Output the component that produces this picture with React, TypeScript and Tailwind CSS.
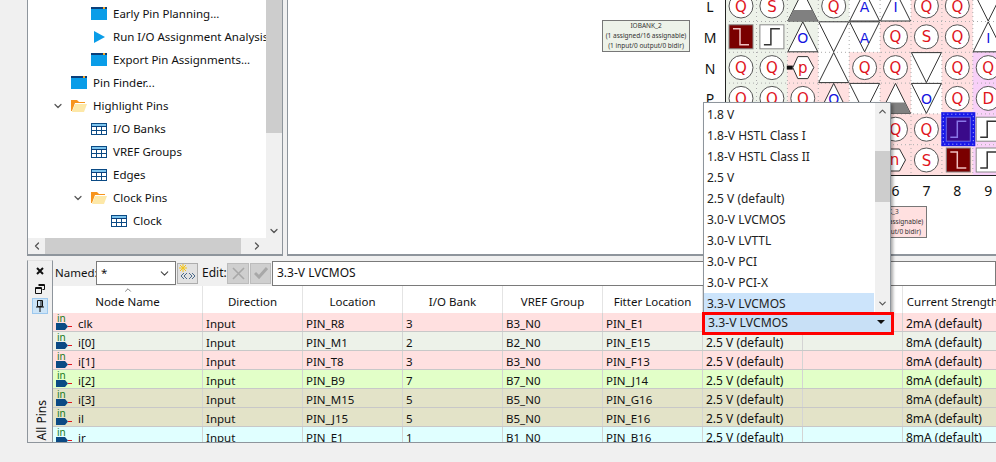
import { ChevronDown, ChevronLeft, ChevronRight, ChevronUp } from "lucide-react";

const font = "font-['Noto_Sans','Open_Sans',sans-serif]";

function WindowIcon() {
  return (
    <svg width="16" height="13" viewBox="0 0 16 13" className="shrink-0">
      <rect width="16" height="13" fill="#0a9de8" />
      <rect width="16" height="2" fill="#0b3f7a" />
      <rect x="12" width="2" height="2" fill="#f5a623" />
    </svg>
  );
}

function FolderIcon() {
  return (
    <svg width="16" height="12" viewBox="0 0 16 12" className="shrink-0">
      <path d="M0 11V0h6l2 2h6v1H4L1 11z" fill="#f7941d" />
      <path d="M1 12 4 4h12l-3 8z" fill="#fde8a8" />
    </svg>
  );
}

function TableIcon() {
  return (
    <svg width="16" height="12" viewBox="0 0 16 12" className="shrink-0">
      <rect x="0.5" y="0.5" width="15" height="11" fill="#fff" stroke="#0b4a84" />
      <rect x="1" y="1" width="14" height="2" fill="#7cc4ee" />
      <rect y="3" width="16" height="1" fill="#0b3f7a" />
      <path d="M0 7.5h16M5.5 4v8M10.5 4v8" stroke="#0b4a84" />
    </svg>
  );
}

function TreeRow({ label, indent, icon, open }: { label: string; indent: number; icon: React.ReactNode; open?: boolean }) {
  return (
    <div className="flex h-[23px] items-center whitespace-nowrap" style={{ paddingLeft: indent }}>
      <span className="flex w-[19px] shrink-0 justify-start">
        {open ? <ChevronDown size={12} strokeWidth={2.4} className="text-[#555]" /> : null}
      </span>
      {icon}
      <span className="ml-[6px] text-[11.5px] text-[#111]">{label}</span>
    </div>
  );
}

function TreePanel() {
  return (
    <div className="relative h-full w-[256px] shrink-0 overflow-hidden border-r border-b-2 border-l border-[#8e959c] bg-white">
      <div className="h-[238px] w-[238px] overflow-hidden pt-[2px]">
        <TreeRow label="Early Pin Planning..." indent={44} icon={<WindowIcon />} />
        <TreeRow label="Run I/O Assignment Analysis" indent={44} icon={<span className="flex w-[16px] shrink-0 justify-center"><svg width="12" height="12" viewBox="0 0 12 12"><path d="M1 0l11 6-11 6z" fill="#0a9de8" /></svg></span>} />
        <TreeRow label="Export Pin Assignments..." indent={44} icon={<WindowIcon />} />
        <TreeRow label="Pin Finder..." indent={24} icon={<WindowIcon />} />
        <TreeRow label="Highlight Pins" indent={24} open icon={<FolderIcon />} />
        <TreeRow label="I/O Banks" indent={44} icon={<TableIcon />} />
        <TreeRow label="VREF Groups" indent={44} icon={<TableIcon />} />
        <TreeRow label="Edges" indent={44} icon={<TableIcon />} />
        <TreeRow label="Clock Pins" indent={44} open icon={<FolderIcon />} />
        <TreeRow label="Clock" indent={64} icon={<TableIcon />} />
        <TreeRow label="" indent={64} icon={<TableIcon />} />
      </div>
      <div className="absolute top-0 right-0 bottom-[15px] w-[16px] bg-[#f0f0f0]">
        <div className="h-[133px] bg-[#cdcdcd]" />
        <ChevronDown size={12} strokeWidth={2.6} className="absolute right-[2px] bottom-[2px] text-[#555]" />
      </div>
      <div className="absolute right-0 bottom-0 left-0 flex h-[16px] items-center bg-[#f0f0f0]">
        <ChevronLeft size={12} strokeWidth={2.6} className="ml-[3px] text-[#555]" />
        <div className="ml-[2px] h-full w-[196px] bg-[#cdcdcd]" />
        <ChevronRight size={12} strokeWidth={2.6} className="ml-[10px] text-[#555]" />
      </div>
    </div>
  );
}

type PinKind = "Q" | "S" | "O" | "A" | "I" | "D";

function Circle({ x, y, t }: { x: number; y: number; t: PinKind | "p" }) {
  const colour = t === "Q" || t === "S" || t === "D" ? "#e0141c" : "#1414e0";
  return (
    <g>
      <circle cx={x} cy={y} r="12" fill="#fff" stroke="#555" strokeWidth="1" />
      <text x={x} y={y + 5.5} textAnchor="middle" fontSize="15" fontFamily="DejaVu Sans" fill={colour}>{t}</text>
    </g>
  );
}

function Up({ x, y, t, dark }: { x: number; y: number; t?: string; dark?: boolean }) {
  return (
    <g>
      <path d={`M${x} ${y - 15}L${x + 15} ${y + 15}H${x - 15}Z`} fill="#fff" stroke="#333" strokeWidth="1" />
      {dark ? <path d={`M${x - 9.5} ${y + 4}H${x + 9.5}L${x + 15} ${y + 15}H${x - 15}Z`} fill="#808080" /> : null}
      {t ? <text x={x} y={y + 6} textAnchor="middle" fontSize="14" fontFamily="DejaVu Sans" fill="#1414e0">{t}</text> : null}
    </g>
  );
}

function Down({ x, y, t }: { x: number; y: number; t?: string }) {
  return (
    <g>
      <path d={`M${x} ${y + 15}L${x + 15} ${y - 15}H${x - 15}Z`} fill="#fff" stroke="#333" strokeWidth="1" />
      {t ? <text x={x} y={y + 6} textAnchor="middle" fontSize="14" fontFamily="DejaVu Sans" fill="#1414e0">{t}</text> : null}
    </g>
  );
}

function Clk({ x, y, fall, blue }: { x: number; y: number; fall?: boolean; blue?: boolean }) {
  const fill = fall ? "#7a0000" : blue ? "#3a0a8a" : "#fff";
  const line = fall ? "#f0c0c0" : blue ? "#8a78e8" : "#333";
  const d = fall
    ? `M${x - 8} ${y - 8}H${x - 1}V${y + 8}H${x + 8}`
    : `M${x - 8} ${y + 8}H${x - 1}V${y - 8}H${x + 8}`;
  return (
    <g>
      {blue ? <rect x={x - 17} y={y - 17} width="34" height="34" fill="#1818e8" /> : null}
      {blue ? <rect x={x - 15} y={y - 15} width="30" height="30" fill="none" stroke="#c8c8ff" strokeDasharray="1 3" /> : null}
      <rect x={x - 12} y={y - 12} width="24" height="24" fill={fill} stroke={blue ? "#6a6ae8" : "#888"} strokeWidth="1" />
      <path d={d} fill="none" stroke={line} strokeWidth="1.5" />
    </g>
  );
}

// package grid centres, in page pixels
const cx = (col: number) => 741 + (col - 1) * 30.9;
const cy = (row: number) => 6 + row * 30.8;

function ChipGrid() {
  const green = "#edf2e9";
  const pink = "#ffe0e0";
  const lilac = "#f8d0f8";
  const tints: [number, number, string][] = [
    [1, 0, green], [2, 0, green], [3, 0, green], [4, 0, green], [7, 0, pink], [8, 0, pink],
    [1, 1, green], [2, 1, green], [3, 1, green], [6, 1, pink], [7, 1, pink], [8, 1, pink],
    [1, 2, green], [2, 2, green], [3, 2, pink], [5, 2, pink], [6, 2, pink], [8, 2, pink], [9, 2, lilac],
    [1, 3, green], [2, 3, green], [3, 3, pink], [4, 3, pink], [6, 3, pink], [8, 3, pink], [9, 3, lilac],
    [6, 4, pink], [7, 4, pink], [8, 4, pink], [9, 4, lilac],
    [6, 5, pink], [7, 5, pink], [8, 5, pink], [9, 5, lilac],
  ];
  return (
    <svg width="996" height="256" viewBox="0 0 996 256" className="absolute top-0 left-[-288px]">
      {tints.map(([c, r, f]) => (
        <rect key={`${c}-${r}`} x={cx(c) - 15.5} y={cy(r) - 15.5} width="31" height="31" fill={f} />
      ))}
      {[1, 2, 3, 4, 5, 6, 7, 8, 9].map((c) => (
        <path key={c} d={`M${cx(c) + 15.5} 0V175`} stroke="#aaa" strokeDasharray="1 3" />
      ))}
      {[0, 1, 2, 3, 4].map((r) => (
        <path key={r} d={`M725 ${cy(r) + 15.5}H996`} stroke="#aaa" strokeDasharray="1 3" />
      ))}
      <path d="M725.5 0V175.5H996" fill="none" stroke="#222" />

      {/* row L */}
      <Circle x={cx(1)} y={cy(0)} t="Q" />
      <Circle x={cx(2)} y={cy(0)} t="S" />
      <Up x={cx(3)} y={cy(0)} dark />
      <Circle x={cx(4)} y={cy(0)} t="Q" />
      <Up x={cx(5)} y={cy(0)} t="A" />
      <Up x={cx(6)} y={cy(0)} t="I" />
      <Circle x={cx(7)} y={cy(0)} t="Q" />
      <Circle x={cx(8)} y={cy(0)} t="Q" />
      <Down x={cx(9)} y={cy(0)} />

      {/* row M */}
      <Clk x={cx(1)} y={cy(1)} fall />
      <Clk x={cx(2)} y={cy(1)} />
      <Up x={cx(3)} y={cy(1)} t="O" />
      <Down x={cx(4)} y={cy(1)} />
      <Down x={cx(5)} y={cy(1)} t="A" />
      <Circle x={cx(6)} y={cy(1)} t="Q" />
      <Circle x={cx(7)} y={cy(1)} t="S" />
      <Circle x={cx(8)} y={cy(1)} t="Q" />
      <Up x={cx(9)} y={cy(1)} t="I" />

      {/* row N */}
      <Circle x={cx(1)} y={cy(2)} t="Q" />
      <Circle x={cx(2)} y={cy(2)} t="Q" />
      <rect x={cx(3) - 16} y={cy(2) - 2} width="6" height="4" fill="#111" />
      <path d={`M${cx(3) - 10} ${cy(2)}l5 -11h10l6 11l-6 11h-10z`} fill="#fff" stroke="#333" />
      <text x={cx(3)} y={cy(2) + 5} textAnchor="middle" fontSize="15" fontFamily="DejaVu Sans" fill="#e0141c">p</text>
      <Up x={cx(4)} y={cy(2)} />
      <Circle x={cx(5)} y={cy(2)} t="Q" />
      <Circle x={cx(6)} y={cy(2)} t="Q" />
      <Down x={cx(7)} y={cy(2)} />
      <Circle x={cx(8)} y={cy(2)} t="Q" />
      <Circle x={cx(9)} y={cy(2)} t="Q" />

      {/* row P */}
      <Circle x={cx(1)} y={cy(3)} t="Q" />
      <Circle x={cx(2)} y={cy(3)} t="Q" />
      <Circle x={cx(3)} y={cy(3)} t="Q" />
      <Up x={cx(4)} y={cy(3)} t="O" />
      <Down x={cx(5)} y={cy(3)} />
      <Up x={cx(6)} y={cy(3)} dark />
      <Down x={cx(7)} y={cy(3)} t="O" />
      <Circle x={cx(8)} y={cy(3)} t="Q" />
      <Circle x={cx(9)} y={cy(3)} t="D" />

      {/* rows R and T, mostly behind the list */}
      <Circle x={cx(6)} y={cy(4)} t="Q" />
      <Circle x={cx(7)} y={cy(4)} t="Q" />
      <Clk x={cx(8) + 1} y={cy(4)} blue />
      <Clk x={cx(9)} y={cy(4)} />
      <path d={`M${cx(6) - 14} ${cy(5) - 11}h18l6 11l-6 11h-18z`} fill="#fff" stroke="#333" />
      <text x={cx(6) - 1} y={cy(5) + 5} textAnchor="middle" fontSize="15" fontFamily="DejaVu Sans" fill="#e0141c">n</text>
      <Circle x={cx(7)} y={cy(5)} t="S" />
      <Clk x={cx(8) + 1} y={cy(5)} fall />
      <Clk x={cx(9)} y={cy(5)} />

      {["L", "M", "N", "P"].map((t, i) => (
        <text key={t} x="710" y={cy(i) + 6} textAnchor="middle" fontSize="14" fontFamily="Noto Sans" fill="#111">{t}</text>
      ))}
      {[6, 7, 8, 9].map((c) => (
        <text key={c} x={cx(c)} y="196" textAnchor="middle" fontSize="14" fontFamily="Noto Sans" fill="#111">{c}</text>
      ))}
    </svg>
  );
}

function BankLabel({ name, tint, left }: { name: string; tint: string; left: string }) {
  return (
    <div className={`absolute flex h-[32px] w-[88px] flex-col items-center justify-center border border-[#777] text-[6.5px] leading-[10px] whitespace-nowrap text-[#333] ${tint} ${left}`}>
      <div>{name}</div>
      <div>(1 assigned/16 assignable)</div>
      <div>(1 input/0 output/0 bidir)</div>
    </div>
  );
}

function ChipPanel() {
  return (
    <div className="relative ml-[4px] h-full min-w-0 flex-1 overflow-hidden border-b-2 border-l border-[#8e959c] bg-white">
      <ChipGrid />
      <BankLabel name="IOBANK_2" tint="bg-[#edf2e9]" left="top-[20px] left-[314px]" />
      <BankLabel name="IOBANK_3" tint="bg-[#ffe0e0]" left="top-[206px] left-[551px]" />
    </div>
  );
}

const headers = ["Direction", "Location", "I/O Bank", "VREF Group", "Fitter Location", "I/O Standard", "Reserved", "Current Strength"];

const rows = [
  { name: "clk", loc: "PIN_R8", bank: "3", vref: "B3_N0", fit: "PIN_E1", cur: "2mA (default)", bg: "bg-[#ffe0e0]" },
  { name: "i[0]", loc: "PIN_M1", bank: "2", vref: "B2_N0", fit: "PIN_E15", cur: "8mA (default)", bg: "bg-[#edf2e9]" },
  { name: "i[1]", loc: "PIN_T8", bank: "3", vref: "B3_N0", fit: "PIN_F13", cur: "8mA (default)", bg: "bg-[#ffe0e0]" },
  { name: "i[2]", loc: "PIN_B9", bank: "7", vref: "B7_N0", fit: "PIN_J14", cur: "8mA (default)", bg: "bg-[#e2ffc8]" },
  { name: "i[3]", loc: "PIN_M15", bank: "5", vref: "B5_N0", fit: "PIN_G16", cur: "8mA (default)", bg: "bg-[#e3e3c8]" },
  { name: "il", loc: "PIN_J15", bank: "5", vref: "B5_N0", fit: "PIN_E16", cur: "8mA (default)", bg: "bg-[#e3e3c8]" },
  { name: "ir", loc: "PIN_E1", bank: "1", vref: "B1_N0", fit: "PIN_B16", cur: "8mA (default)", bg: "bg-[#e0ffff]" },
];

function InPin() {
  return (
    <svg width="16" height="18" viewBox="0 0 16 18" className="shrink-0">
      <text x="1" y="9" fontSize="10" fontFamily="Noto Sans" fill="#1a7a1a">in</text>
      <path d="M0 10h9l3 3.5-3 3.5H0z" fill="#0b4a84" />
      <path d="M12 13.5h4" stroke="#e0141c" />
    </svg>
  );
}

const cell = "flex h-full w-[100px] shrink-0 items-center overflow-hidden border-r border-[#d4d4d4] pt-[3px] pl-[3px] whitespace-nowrap";

function PinTable() {
  return (
    <div className="min-w-0 flex-1 overflow-hidden bg-white text-[11.5px] text-[#111]">
      <div className="relative flex h-[27px]">
        <ChevronUp size={10} className="absolute top-[-1px] left-[70px] text-[#666]" />
        <div className="flex h-full w-[150px] shrink-0 items-center justify-center border-r border-[#e4e4e4] pt-[5px]">Node Name</div>
        {headers.map((h) => (
          <div key={h} className="flex h-full w-[100px] shrink-0 items-center justify-center border-r border-[#e4e4e4] pt-[5px] whitespace-nowrap">{h}</div>
        ))}
      </div>
      {rows.map((r) => (
        <div key={r.name} className={`flex h-[19px] border-b border-[#c8c8c8] ${r.bg}`}>
          <div className="flex h-full w-[150px] shrink-0 items-start border-r border-[#d4d4d4] pl-[3px]">
            <InPin />
            <span className="mt-[2px] ml-[6px]">{r.name}</span>
          </div>
          <div className={cell}>Input</div>
          <div className={cell}>{r.loc}</div>
          <div className={cell}>{r.bank}</div>
          <div className={cell}>{r.vref}</div>
          <div className={cell}>{r.fit}</div>
          <div className={`${cell} text-[12px]`}>2.5 V (default)</div>
          <div className={cell} />
          <div className={`${cell} text-[12px]`}>{r.cur}</div>
        </div>
      ))}
    </div>
  );
}

function SideStrip() {
  return (
    <div className="relative flex w-[26px] shrink-0 flex-col items-center border-t border-r border-l border-t-[#e2e2e2] border-r-[#8e959c] border-l-[#8e959c] pt-[5px]">
      <svg width="10" height="10" viewBox="0 0 10 10"><path d="M2 2l6 6M8 2l-6 6" stroke="#111" strokeWidth="2" /></svg>
      <svg width="10" height="10" viewBox="0 0 10 10" className="mt-[8px]"><path d="M3.5 .5h6v5h-2M.5 3.5h6v6h-6zM.5 4.5h6M3.5 1.5h6" fill="none" stroke="#111" /></svg>
      <div className="mt-[4px] flex h-[16px] w-[16px] items-center justify-center border border-[#9cc8ee] bg-[#cce4f7]">
        <svg width="8" height="12" viewBox="0 0 8 12"><path d="M1.5 .5h5v6h-5zM0 7h8M4 7v5M5 1v5" fill="none" stroke="#111" /></svg>
      </div>
      <div className="absolute bottom-[1px] left-[7px] rotate-180 text-[12px] leading-[14px] whitespace-nowrap text-[#111] [writing-mode:vertical-rl]">All Pins</div>
    </div>
  );
}

function ToolBar() {
  return (
    <div className="flex h-[26px] items-center pl-[2px] text-[11.5px] text-[#111]">
      <span className="w-[41px] shrink-0">Named:</span>
      <div className="flex h-[24px] w-[80px] items-center justify-between border border-[#7a7a7a] bg-white px-[4px]">
        <span>*</span>
        <ChevronDown size={13} className="text-[#444]" />
      </div>
      <div className="relative ml-[1px] flex h-[21px] w-[21px] items-center justify-center border border-[#adadad] bg-[#e1e1e1]">
        <svg width="19" height="19" viewBox="0 0 19 19">
          <path d="M5 0v8M1 4h8M2 1l6 6M8 1L2 7" stroke="#f5c518" />
          <path d="M6 9l-3 3 3 3M9 9l-3 3 3 3M11 9l3 3-3 3M14 9l3 3-3 3" fill="none" stroke="#4a6a8a" />
        </svg>
      </div>
      <span className="ml-[4px] w-[24px] shrink-0 text-[12px]">Edit:</span>
      <div className="ml-[1px] flex h-[21px] w-[22px] items-center justify-center border border-[#bcbcbc] bg-[#cfcfcf]">
        <svg width="13" height="13" viewBox="0 0 13 13"><path d="M1 1l11 11M12 1L1 12" stroke="#a8a8a8" strokeWidth="1.6" /></svg>
      </div>
      <div className="ml-[1px] flex h-[21px] w-[21px] items-center justify-center border border-[#bcbcbc] bg-[#cfcfcf]">
        <svg width="14" height="12" viewBox="0 0 14 12"><path d="M1 6l4 4 8-9" fill="none" stroke="#a8a8a8" strokeWidth="3" /></svg>
      </div>
      <div className="ml-[1px] flex h-[25px] flex-1 items-center border border-[#7a7a7a] bg-white pl-[4px] text-[12px]">3.3-V LVCMOS</div>
    </div>
  );
}

const options = ["1.8 V", "1.8-V HSTL Class I", "1.8-V HSTL Class II", "2.5 V", "2.5 V (default)", "3.0-V LVCMOS", "3.0-V LVTTL", "3.0-V PCI", "3.0-V PCI-X", "3.3-V LVCMOS"];

function DropdownList() {
  return (
    <div className="absolute top-[102px] left-[703px] z-10 flex h-[212px] w-[188px] border border-[#8e959c] bg-white pt-[1px] text-[12px] text-[#222] shadow-[2px_2px_3px_rgba(0,0,0,0.35)]">
      <div className="min-w-0 flex-1">
        {options.map((o) => (
          <div key={o} className={`flex h-[21px] items-center pl-[3px] ${o === "3.3-V LVCMOS" ? "bg-[#cce4fb]" : ""}`}>{o}</div>
        ))}
      </div>
      <div className="relative -mt-[1px] ml-[1px] w-[15px] shrink-0 bg-[#f0f0f0]">
        <ChevronUp size={11} strokeWidth={2.6} className="absolute top-[3px] left-[2px] text-[#555]" />
        <div className="absolute top-[48px] h-[51px] w-full bg-[#cdcdcd]" />
        <ChevronDown size={11} strokeWidth={2.6} className="absolute bottom-[4px] left-[2px] text-[#555]" />
      </div>
    </div>
  );
}

export default function App() {
  return (
    <div className={`relative flex h-[462px] w-[996px] flex-col overflow-hidden bg-[#f0f0f0] ${font}`}>
      <div className="flex h-[256px] shrink-0 pl-[27px]">
        <TreePanel />
        <ChipPanel />
      </div>
      <div className="mt-[4px] ml-[27px] flex h-[183px] shrink-0 border-b border-[#8e959c]">
        <SideStrip />
        <div className="flex min-w-0 flex-1 flex-col">
          <ToolBar />
          <PinTable />
        </div>
      </div>
      <DropdownList />
      <div className="absolute top-[312px] left-[702px] z-20 flex h-[23px] w-[192px] items-center justify-between border-[3px] border-[#ff0000] bg-[#c8e0f6] pr-[6px] pl-[3px] text-[12.2px] text-[#222]">
        <span>3.3-V LVCMOS</span>
        <svg width="8" height="4" viewBox="0 0 8 4" className="mb-[4px]"><path d="M0 0h8L4 4z" fill="#111" /></svg>
      </div>
    </div>
  );
}
